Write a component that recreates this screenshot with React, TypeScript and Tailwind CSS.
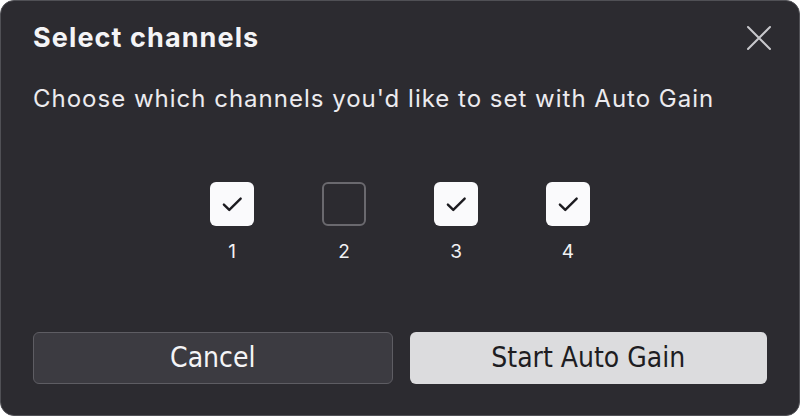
import React, { useState } from 'react';

const font = { fontFamily: 'Inter, "Noto Sans", sans-serif' };
const btnFont = { fontFamily: '"DejaVu Sans Condensed", "DejaVu Sans", sans-serif' };

function Check({ on, label, onToggle }: { on: boolean; label: string; onToggle: () => void }) {
  return (
    <button onClick={onToggle} className="flex flex-col items-center gap-[16px]">
      {on ? (
        <span className="flex h-[44px] w-[44px] items-center justify-center rounded-[6px] bg-[#fafafc]">
          <svg width="26" height="26" viewBox="0 0 24 24" fill="none" stroke="#1c1b20" strokeWidth="2.2" strokeLinecap="round" strokeLinejoin="round">
            <path d="M4.5 12.5l5 5L20 7" />
          </svg>
        </span>
      ) : (
        <span className="h-[44px] w-[44px] rounded-[6px] border-2 border-[#6a696e]" />
      )}
      <span className="text-[19px] leading-none text-[#f2f2f4]">{label}</span>
    </button>
  );
}

export default function App() {
  const [checked, setChecked] = useState([true, false, true, true]);

  return (
    <div className="h-[416px] w-[800px] bg-white" style={font}>
      <div className="flex h-full w-full flex-col rounded-[14px] border border-[#505055] bg-[#2c2b30] px-[32px] pt-[17px] pb-[31px]">
        <div className="flex items-center justify-between">
          <h1 className="text-[27px] font-bold tracking-[1.1px] text-[#f4f4f6]">Select channels</h1>
          <button className="mr-[-6px] text-[#c8c8cc]">
            <svg width="28" height="28" viewBox="0 0 28 28" fill="none" stroke="currentColor" strokeWidth="2" strokeLinecap="round">
              <path d="M3 3l22 22M25 3L3 25" />
            </svg>
          </button>
        </div>
        <p className="mt-[26px] text-[24px] leading-[28px] tracking-[1px] text-[#ecebef]">Choose which channels you'd like to set with Auto Gain</p>

        <div className="mt-[69px] flex justify-center gap-[68px]">
          {checked.map((on, i) => (
            <Check
              key={i}
              on={on}
              label={String(i + 1)}
              onToggle={() => setChecked(checked.map((c, j) => (j === i ? !c : c)))}
            />
          ))}
        </div>

        <div className="mt-auto flex gap-[17px]" style={btnFont}>
          <button className="h-[52px] flex-1 rounded-[6px] border border-[#5e5d63] bg-[#3c3b41] text-[28px] text-[#f4f4f6]">
            Cancel
          </button>
          <button className="h-[52px] flex-1 rounded-[6px] bg-[#dcdcde] text-[28px] text-[#1e1d22]">
            Start Auto Gain
          </button>
        </div>
      </div>
    </div>
  );
}
